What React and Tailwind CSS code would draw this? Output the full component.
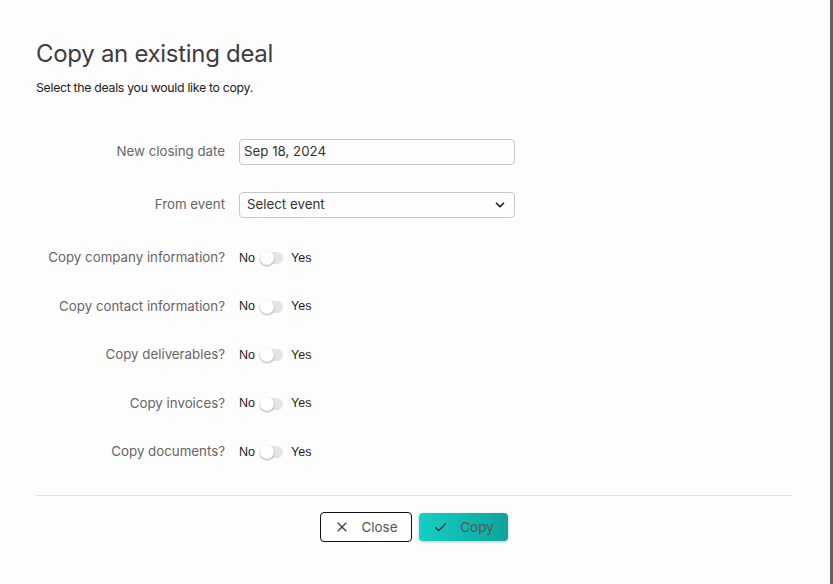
import React from 'react';
import { X, Check, ChevronDown } from 'lucide-react';

const toggles = [
  'Copy company information?',
  'Copy contact information?',
  'Copy deliverables?',
  'Copy invoices?',
  'Copy documents?',
];

function Toggle() {
  return (
    <div className="relative w-[22px] h-[12px] rounded-full bg-[#e4e4e4] mx-[6px]">
      <div className="absolute -left-[1px] -top-[1px] w-[14px] h-[14px] rounded-full bg-white shadow-[0_1px_2px_rgba(0,0,0,0.35)]" />
    </div>
  );
}

export default function App() {
  return (
    <div className="w-[833px] h-[584px] bg-[#fdfdfd] flex overflow-hidden" style={{ fontFamily: 'Inter, "Noto Sans", sans-serif' }}>
      <div className="flex-1 flex flex-col pl-[36px] pr-[38px] pt-[39px]">
        <h1 className="text-[24px] leading-[30px] text-[#3d3d3d] tracking-[-0.3px]">Copy an existing deal</h1>
        <p className="mt-[11px] text-[12.3px] leading-[16px] text-[#222] tracking-[-0.3px]">Select the deals you would like to copy.</p>

        <div className="mt-[43px] flex flex-col text-[13.3px] text-[#666]">
          <div className="flex items-center h-[26px]">
            <div className="w-[203px] text-right pr-[14px]">New closing date</div>
            <div className="w-[276px] h-[26px] border border-[#c8c8c8] rounded-[4px] flex items-center px-[4px] text-[#333]">Sep 18, 2024</div>
          </div>
          <div className="flex items-center h-[26px] mt-[27px]">
            <div className="w-[203px] text-right pr-[14px]">From event</div>
            <div className="w-[276px] h-[26px] border border-[#c8c8c8] rounded-[4px] flex items-center justify-between px-[7px] text-[#333]">
              <span>Select event</span>
              <ChevronDown className="w-[14px] h-[14px] text-[#222]" strokeWidth={3} />
            </div>
          </div>
          <div className="flex flex-col gap-[30.5px] mt-[31px]">
            {toggles.map((t) => (
              <div key={t} className="flex items-center h-[18px]">
                <div className="w-[203px] text-right pr-[14px]">{t}</div>
                <span className="text-[12.5px] text-[#222]" style={{ fontFamily: '"Liberation Sans", Arial, sans-serif' }}>No</span>
                <Toggle />
                <span className="text-[12.5px] text-[#222] ml-[2px]" style={{ fontFamily: '"Liberation Sans", Arial, sans-serif' }}>Yes</span>
              </div>
            ))}
          </div>
        </div>

        <div className="mt-[34px] h-px bg-[#e2e2e2]" />

        <div className="flex justify-center gap-[7px] mt-[16px]">
          <button className="w-[92px] h-[30px] border border-[#111] rounded-[4px] bg-white flex items-center justify-center gap-[11px] text-[13.5px] text-[#555]">
            <X className="w-[16px] h-[16px] text-[#333]" strokeWidth={1.6} />
            <span>Close</span>
          </button>
          <button className="w-[89px] h-[28px] mt-[1px] rounded-[4px] bg-gradient-to-r from-[#15cfc6] to-[#0da49c] shadow-[0_1px_3px_rgba(0,0,0,0.25)] flex items-center justify-center gap-[12px] text-[13.5px] text-[#555]">
            <Check className="w-[15px] h-[15px] text-[#333]" strokeWidth={2} />
            <span>Copy</span>
          </button>
        </div>
      </div>
      <div className="w-[3px] h-full bg-[#606066]" />
    </div>
  );
}
